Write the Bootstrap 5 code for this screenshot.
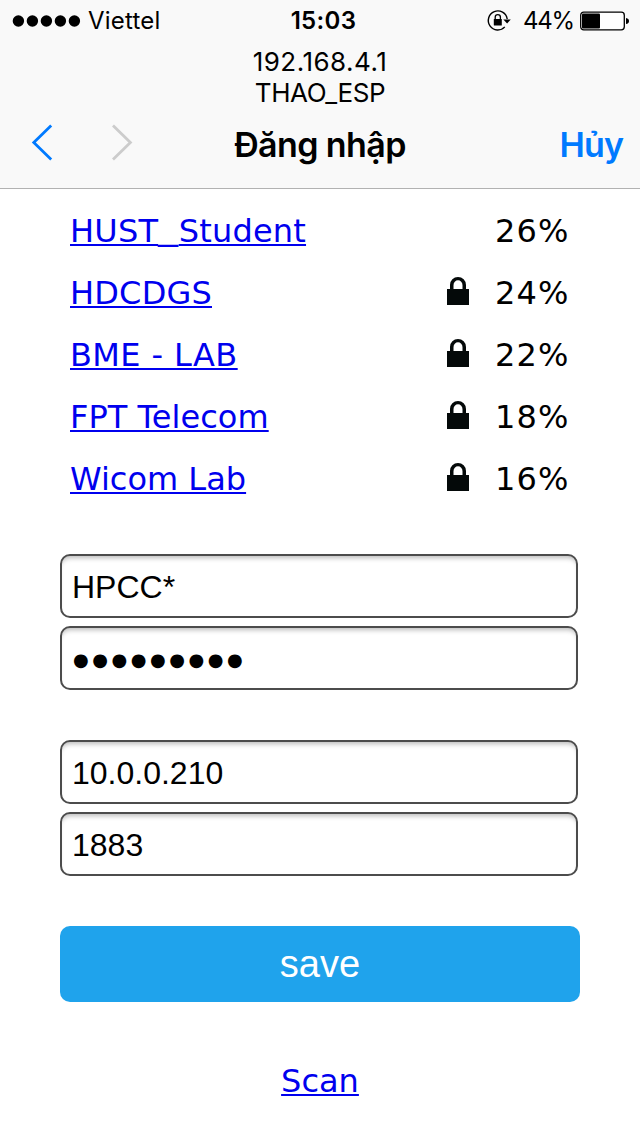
<!DOCTYPE html>
<html lang="vi">
<head>
<meta charset="utf-8">
<meta name="viewport" content="width=device-width, initial-scale=1">
<title>Đăng nhập</title>
<link rel="stylesheet" href="https://cdn.jsdelivr.net/npm/bootstrap@5.3.0/dist/css/bootstrap.min.css">
<style>
body { font-family: "DejaVu Sans", sans-serif; font-size: 32px; color: #000; background: #fff; height: 1136px; overflow: hidden; }
.ios-head { height: 189px; background: #f9f9f9; border-bottom: 1px solid #b2b2b2; font-family: Inter, sans-serif; }
.status-row { height: 41px; font-size: 24px; line-height: 42px; display: grid; grid-template-columns: 1fr auto 1fr; padding: 0 10px 0 12px; }
.carrier { letter-spacing: .2px; margin-left: 7px; }
.clock { font-weight: 600; letter-spacing: .35px; margin-left: 5px; }
.battery-pct { margin-left: 11px; letter-spacing: -1.2px; }
.portal { font-size: 26px; line-height: 31px; padding-top: 5px; }
.ip { letter-spacing: .5px; }
.ssid { letter-spacing: -.4px; }
.title-row { height: 80px; display: grid; grid-template-columns: 1fr auto 1fr; padding: 0 17px 0 31px; font-size: 34px; line-height: 74px; font-weight: 600; }
.nav-arrows { gap: 58px; }
.page-name { letter-spacing: -.6px; margin-left: -14px; }
.cancel { color: #007aff; letter-spacing: -.9px; }
.net-list { padding: 11px 70px 0; }
.net-row { height: 62px; line-height: 62px; }
.net-row a, .scan { color: #00e; text-decoration: underline; text-decoration-thickness: 2px; text-underline-offset: 2px; }
.n1 { letter-spacing: .2px; }
.n1 span { display: inline-block; width: 20.500px; line-height: 1; vertical-align: 3px; transform: scaleX(1.25); transform-origin: left; }
.n2 { letter-spacing: .2px; }
.n3 { letter-spacing: .4px; }
.n4 { letter-spacing: .05px; }
.lock { margin: -4px 0 0 auto; }
.lock + .pct { margin-left: 26px; }
.pct { width: 75px; letter-spacing: 1.1px; white-space: nowrap; }
.fields { padding: 44px 62px 0 60px; }
.fields + .fields { padding-top: 42px; }
.fields .form-control { height: 64px; border: 2px solid #4c4c4c; border-radius: 10px; padding: 3px 10px 0; font: 32px "Liberation Sans", sans-serif; color: #000; box-shadow: inset 0 5px 5px -3px #bbb; margin-bottom: 8px; }
.fields .secret { font: 18px/28px "DejaVu Sans", sans-serif; letter-spacing: 3.55px; padding-left: 11px; padding-top: 4px; }
.save-wrap { padding: 42px 60px 0; }
.save-btn { height: 76px; border: 0; border-radius: 10px; background: #1fa3ec !important; color: #fff !important; font: 38px "Liberation Sans", sans-serif; letter-spacing: .1px; }
.scan-wrap { padding-top: 55px; line-height: 48px; }
svg { display: block; flex: none; }
</style>
<script src="https://cdn.jsdelivr.net/npm/bootstrap@5.3.0/dist/js/bootstrap.bundle.min.js"></script>
</head>
<body>
<header class="ios-head">
  <div class="status-row">
    <div class="d-flex align-items-center">
      <svg width="69" height="14" viewBox="0 0 69 14"><circle cx="6.4" cy="7" r="5.7"/><circle cx="20.4" cy="7" r="5.7"/><circle cx="34.4" cy="7" r="5.7"/><circle cx="48.4" cy="7" r="5.7"/><circle cx="62.4" cy="7" r="5.7"/></svg>
      <span class="carrier">Viettel</span>
    </div>
    <div class="clock">15:03</div>
    <div class="d-flex align-items-center justify-content-end">
      <svg width="26" height="24" viewBox="0 0 26 24"><path d="M21.200 10.500A9.500 9.500 0 1 0 18.800 18.400" transform="translate(0 -.5)" fill="none" stroke="#000" stroke-width="1.400"/><path d="M17.300 10.500h7.500l-3.700 4z"/><rect x="7.800" y="10" width="8" height="6.500" rx=".5"/><path d="M9.200 11V8.200a2.600 2.600 0 0 1 5.200 0v2.800" fill="none" stroke="#000" stroke-width="1.300"/></svg>
      <span class="battery-pct">44%</span>
      <svg style="margin-left:6px" width="50" height="20" viewBox="0 0 50 20"><rect x=".700" y="1.200" width="43.600" height="17.600" rx="3" fill="#fff" stroke="#000" stroke-width="1.300"/><rect x="2" y="2.500" width="18" height="15" rx="1"/><path d="M46 7q3 .500 3 3t-3 3z"/></svg>
    </div>
  </div>
  <div class="portal text-center"><div class="ip">192.168.4.1</div><div class="ssid">THAO_ESP</div></div>
  <div class="title-row">
    <div class="d-flex nav-arrows">
      <svg class="mt-3" width="22" height="38" viewBox="0 0 22 38" fill="none" stroke="#007aff" stroke-width="2.800"><path d="M20.200 1.500 2.800 18.500l17.400 17"/></svg>
      <svg class="mt-3" width="22" height="38" viewBox="0 0 22 38" fill="none" stroke="#ccc" stroke-width="2.800"><path d="M2 1.500l17.400 17L2 35.500"/></svg>
    </div>
    <div class="page-name">Đăng nhập</div>
    <div class="cancel text-end">Hủy</div>
  </div>
</header>
<svg width="0" height="0" class="position-absolute"><symbol id="lock" viewBox="0 0 22 29"><path fill="#040909" fill-rule="evenodd" d="M0 12h3V8a8 8 0 0 1 16 0v4h3v16H0zM6.500 12h9V8.200a4.500 5 0 0 0-9 0z"/></symbol></svg>
<main>
  <div class="net-list">
    <div class="net-row d-flex align-items-center"><a href="#" class="n1">HUST<span>_</span>Student</a><span class="pct ms-auto">26%</span></div>
    <div class="net-row d-flex align-items-center"><a href="#" class="n2">HDCDGS</a><svg class="lock" width="22" height="29"><use href="#lock"/></svg><span class="pct">24%</span></div>
    <div class="net-row d-flex align-items-center"><a href="#" class="n3">BME - LAB</a><svg class="lock" width="22" height="29"><use href="#lock"/></svg><span class="pct">22%</span></div>
    <div class="net-row d-flex align-items-center"><a href="#" class="n4">FPT Telecom</a><svg class="lock" width="22" height="29"><use href="#lock"/></svg><span class="pct">18%</span></div>
    <div class="net-row d-flex align-items-center"><a href="#" class="n5">Wicom Lab</a><svg class="lock" width="22" height="29"><use href="#lock"/></svg><span class="pct">16%</span></div>
  </div>
  <form>
    <div class="fields">
      <div class="form-control d-flex align-items-center">HPCC*</div>
      <div class="form-control secret d-flex align-items-center">●●●●●●●●●</div>
    </div>
    <div class="fields">
      <div class="form-control d-flex align-items-center">10.0.0.210</div>
      <div class="form-control d-flex align-items-center">1883</div>
    </div>
    <div class="save-wrap"><button type="button" class="btn save-btn w-100 p-0">save</button></div>
  </form>
  <div class="text-center scan-wrap"><a href="#" class="scan">Scan</a></div>
</main>
</body>
</html>
